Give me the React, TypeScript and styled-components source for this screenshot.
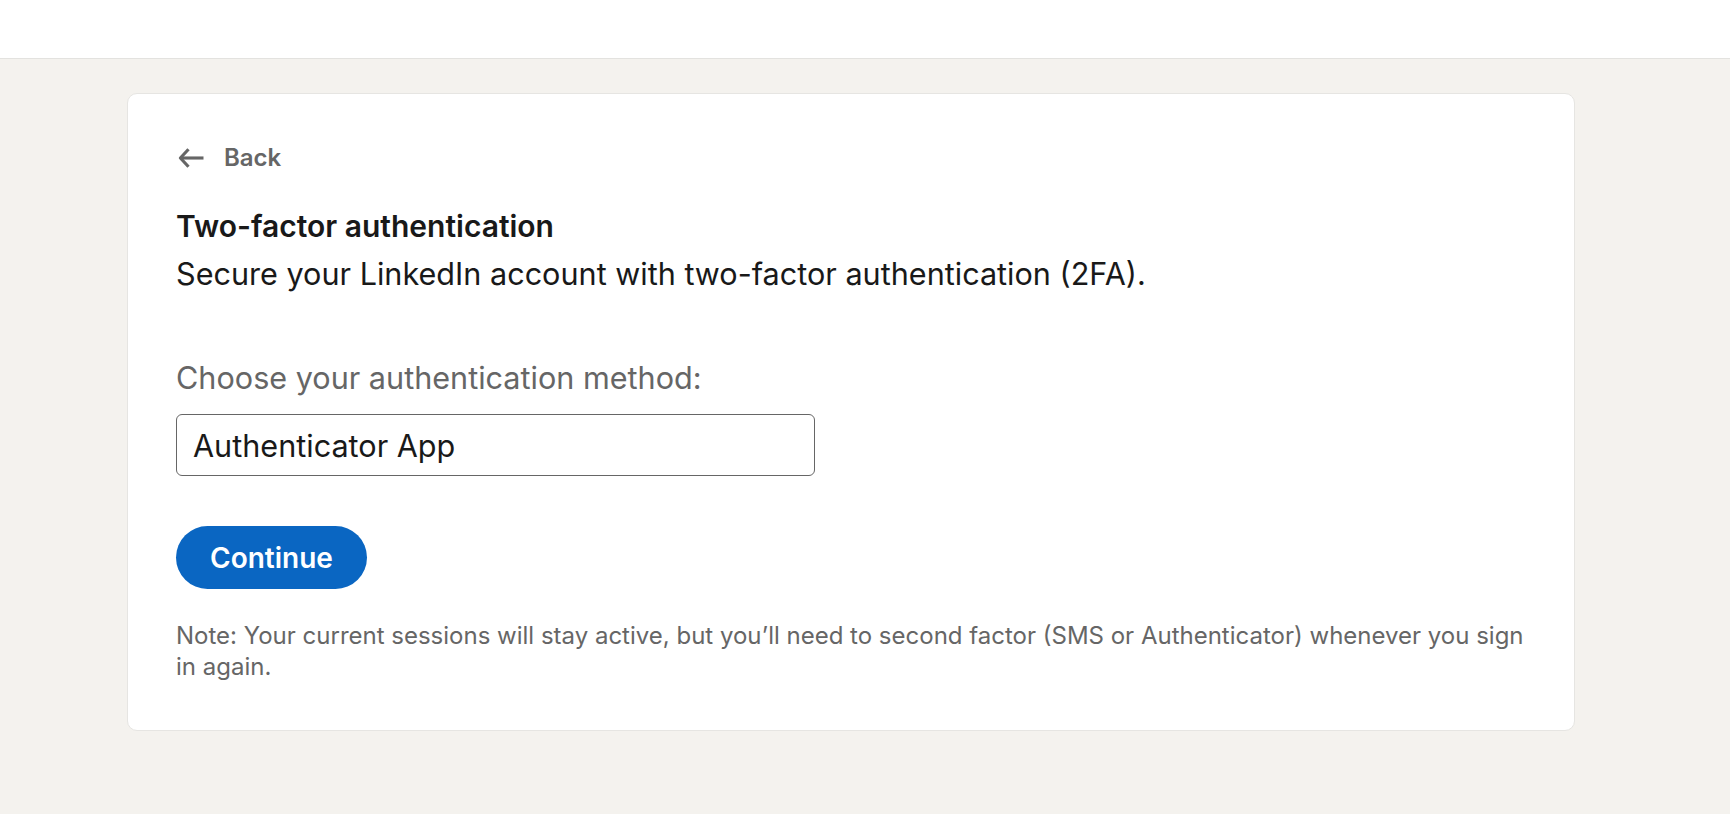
import React from 'react'
import styled, { createGlobalStyle } from 'styled-components'

const GlobalStyle = createGlobalStyle`
  html, body {
    margin: 0;
    padding: 0;
    background: #f4f2ee;
    font-family: Inter, "Noto Sans", "Liberation Sans", sans-serif;
    -webkit-font-smoothing: antialiased;
  }
  * {
    box-sizing: border-box;
  }
`

const ArrowLeft: React.FC = () => (
  <svg width="30" height="30" viewBox="0 0 24 24" fill="none" aria-hidden="true">
    <path d="M22 12H3.5" stroke="currentColor" strokeWidth="2.5" />
    <path d="M10 5l-6.5 7 6.5 7" stroke="currentColor" strokeWidth="2.5" strokeLinejoin="round" />
  </svg>
)

const App: React.FC = () => {
  return (
    <>
      <GlobalStyle />
      <TopBar />
      <Main>
        <Card>
          <BackLink href="#">
            <ArrowLeft />
            <span>Back</span>
          </BackLink>
          <Title>Two-factor authentication</Title>
          <Subtitle>Secure your LinkedIn account with two-factor authentication (2FA).</Subtitle>
          <Field>
            <Label htmlFor="method">Choose your authentication method:</Label>
            <Select id="method">Authenticator App</Select>
          </Field>
          <PrimaryButton type="button">Continue</PrimaryButton>
          <Note>
            Note: Your current sessions will stay active, but you’ll need to second factor (SMS or
            Authenticator) whenever you sign in again.
          </Note>
        </Card>
      </Main>
    </>
  )
}

const TopBar = styled.header`
  height: 59px;
  background: #ffffff;
  border-bottom: 1px solid #e3e2df;
`

const Main = styled.main`
  padding: 34px 155px 80px 127px;
`

const Card = styled.section`
  display: flex;
  flex-direction: column;
  align-items: flex-start;
  background: #ffffff;
  border: 1px solid #e6e5e2;
  border-radius: 10px;
  padding: 48px 48px 48px;
`

const BackLink = styled.a`
  display: flex;
  align-items: center;
  gap: 18px;
  color: #666666;
  font-size: 24px;
  font-weight: 600;
  line-height: 32px;
  text-decoration: none;
`

const Title = styled.h1`
  margin: 33px 0 0;
  font-size: 30px;
  font-weight: 600;
  line-height: 38px;
  color: #191919;
`

const Subtitle = styled.p`
  margin: 10px 0 0;
  font-size: 30.6px;
  font-weight: 400;
  line-height: 38px;
  color: #191919;
`

const Field = styled.div`
  display: flex;
  flex-direction: column;
  gap: 18px;
  margin-top: 67px;
`

const Label = styled.label`
  font-size: 30.6px;
  line-height: 36px;
  color: #666666;
`

const Select = styled.div`
  display: flex;
  align-items: center;
  width: 639px;
  height: 62px;
  padding: 0 16px;
  border: 1.5px solid #666666;
  border-radius: 6px;
  font-size: 30.6px;
  color: #191919;
`

const PrimaryButton = styled.button`
  margin-top: 50px;
  height: 63px;
  padding: 0 34px;
  border: none;
  border-radius: 32px;
  background: #0a66c2;
  color: #ffffff;
  font-family: inherit;
  font-size: 28px;
  font-weight: 600;
  cursor: pointer;
`

const Note = styled.p`
  margin: 31px 0 0;
  font-size: 24px;
  line-height: 31px;
  color: #666666;
`

export default App
